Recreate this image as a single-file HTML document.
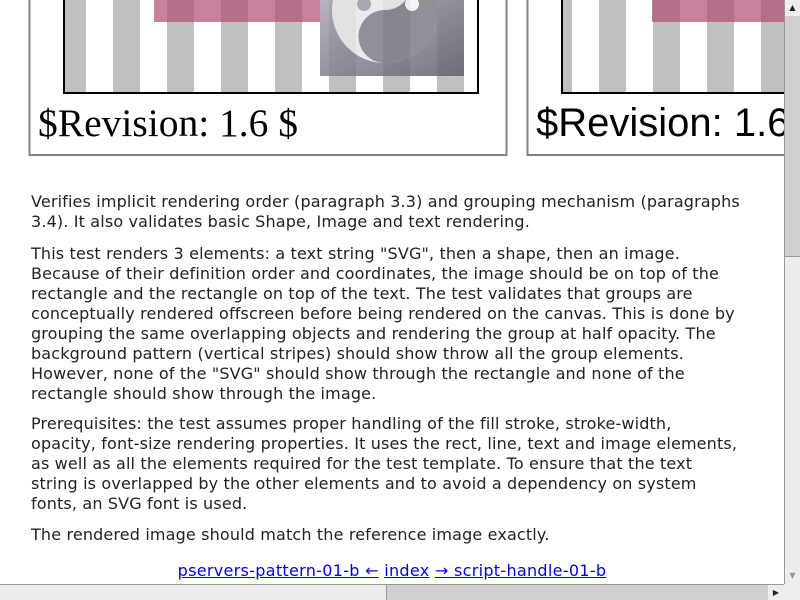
<!DOCTYPE html>
<html><head><style>
html,body{margin:0;padding:0;overflow:hidden;background:#fff}
body{width:800px;height:600px;position:relative;font-family:"DejaVu Sans",Verdana,sans-serif;font-size:16px;letter-spacing:0.15px;color:#222}
.p{position:absolute;left:31px;white-space:nowrap;line-height:20px}
a{color:#00e}
</style></head><body>
<svg width="784" height="170" style="position:absolute;left:0;top:0">
<defs>
<pattern id="st" x="5" y="0" width="54" height="10" patternUnits="userSpaceOnUse">
<rect x="0" y="0" width="27" height="10" fill="#c0c0c0"/>
</pattern>
<linearGradient id="ig" x1="0" y1="0" x2="1" y2="1"><stop offset="0" stop-color="#a8a8b8"/><stop offset="1" stop-color="#606068"/></linearGradient>
<clipPath id="ic"><rect x="320" y="0" width="144" height="76"/></clipPath>
</defs>
<rect x="29.5" y="-5" width="477" height="160" fill="#fff" stroke="#808080" stroke-width="2"/>
<rect x="64" y="-5" width="414" height="98" fill="url(#st)"/>
<rect x="154" y="0" width="166" height="22" fill="#b04c74" opacity="0.7"/>
<g clip-path="url(#ic)" opacity="0.85">
<rect x="320" y="0" width="144" height="76" fill="url(#ig)"/>
<circle cx="385" cy="10" r="53" fill="#e8e8e8"/>
<path d="M385 -43 A53 53 0 0 1 385 63 A26.5 26.5 0 0 1 385 10 A26.5 26.5 0 0 0 385 -43Z" fill="#7c7c86"/>
<circle cx="364" cy="4" r="7" fill="#9a9aa2"/>
<circle cx="412" cy="4" r="7" fill="#f4f4f4"/>
</g>
<rect x="64" y="-5" width="414" height="98" fill="none" stroke="#000" stroke-width="2"/>
<text x="38" y="136" font-family="Liberation Serif,serif" font-size="39.5" letter-spacing="0" fill="#000">$Revision: 1.6 $</text>
<rect x="527.5" y="-5" width="270" height="160" fill="#fff" stroke="#808080" stroke-width="2"/>
<rect x="562" y="-5" width="230" height="98" fill="url(#st)"/>
<rect x="652" y="0" width="140" height="22" fill="#b04c74" opacity="0.7"/>
<rect x="562" y="-5" width="230" height="98" fill="none" stroke="#000" stroke-width="2"/>
<text x="536" y="136" font-family="Liberation Sans,sans-serif" font-size="40" letter-spacing="0" fill="#000">$Revision: 1.6 $</text>
</svg>
<div class="p" style="top:192px">Verifies implicit rendering order (paragraph 3.3) and grouping mechanism (paragraphs<br>3.4). It also validates basic Shape, Image and text rendering.</div>
<div class="p" style="top:244px">This test renders 3 elements: a text string "SVG", then a shape, then an image.<br>Because of their definition order and coordinates, the image should be on top of the<br>rectangle and the rectangle on top of the text. The test validates that groups are<br>conceptually rendered offscreen before being rendered on the canvas. This is done by<br>grouping the same overlapping objects and rendering the group at half opacity. The<br>background pattern (vertical stripes) should show throw all the group elements.<br>However, none of the "SVG" should show through the rectangle and none of the<br>rectangle should show through the image.</div>
<div class="p" style="top:414px">Prerequisites: the test assumes proper handling of the fill stroke, stroke-width,<br>opacity, font-size rendering properties. It uses the rect, line, text and image elements,<br>as well as all the elements required for the test template. To ensure that the text<br>string is overlapped by the other elements and to avoid a dependency on system<br>fonts, an SVG font is used.</div>
<div class="p" style="top:525px">The rendered image should match the reference image exactly.</div>
<div class="p" style="top:561px;left:0;width:784px;text-align:center;letter-spacing:0.3px"><a href="#">pservers-pattern-01-b ←</a> <a href="#">index</a> <a href="#">→ script-handle-01-b</a></div>
<div style="position:absolute;left:784px;top:0;width:16px;height:584px;background:#d0d0d0;border-left:1px solid #999;box-sizing:border-box"></div>
<div style="position:absolute;left:785px;top:0;width:15px;height:16px;background:#eee;font-size:8px;text-align:center;line-height:16px">▲</div>
<div style="position:absolute;left:785px;top:256px;width:15px;height:312px;background:#ececec;border-top:1px solid #999;box-sizing:border-box"></div>
<div style="position:absolute;left:785px;top:568px;width:15px;height:16px;background:#eee;font-size:8px;text-align:center;line-height:16px;color:#999">▼</div>
<div style="position:absolute;left:0;top:584px;width:784px;height:16px;background:#d0d0d0;border-top:1px solid #999;box-sizing:border-box"></div>
<div style="position:absolute;left:0;top:585px;width:387px;height:15px;background:#ececec;border-right:1px solid #999;box-sizing:border-box"></div>
<div style="position:absolute;left:768px;top:585px;width:16px;height:15px;background:#eee;font-size:8px;text-align:center;line-height:15px">▶</div>
<div style="position:absolute;left:784px;top:584px;width:16px;height:16px;background:#eee"></div>
</body></html>
